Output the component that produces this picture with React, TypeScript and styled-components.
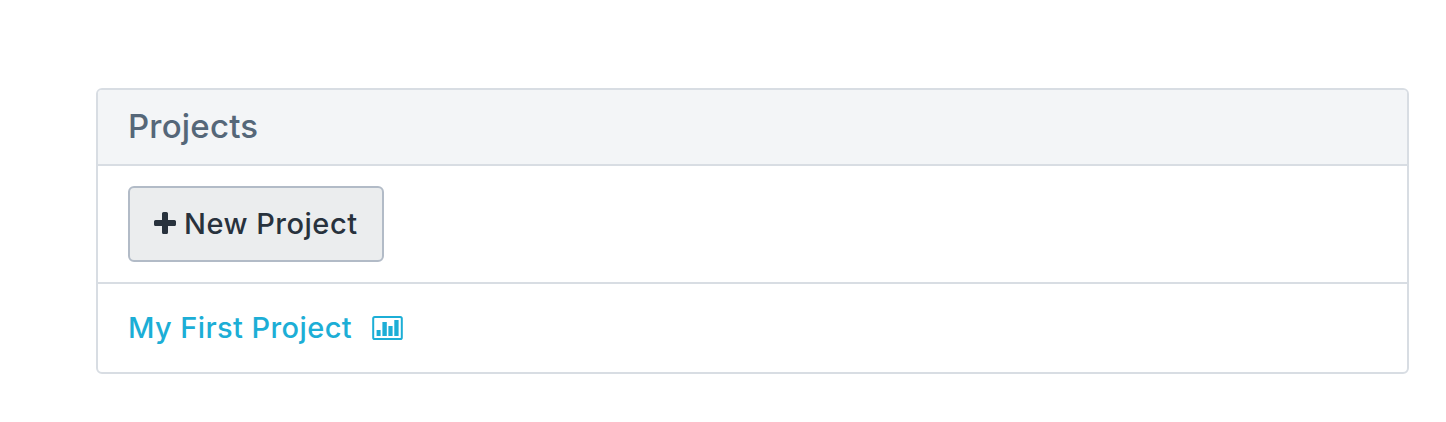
import React from "react";
import styled, { createGlobalStyle } from "styled-components";

const GlobalStyle = createGlobalStyle`
  * { box-sizing: border-box; }
  body {
    margin: 0;
    background: #fff;
    font-family: Inter, "Open Sans", sans-serif;
  }
`;

const Page = styled.main`
  min-height: 422px;
  padding: 88px 37px 48px 96px;
`;

const Panel = styled.section`
  border: 2px solid #d8dde3;
  border-radius: 6px;
  overflow: hidden;
`;

const PanelHeader = styled.header`
  display: flex;
  align-items: center;
  height: 74px;
  padding: 0 30px 2px;
  background: #f3f5f7;
`;

const PanelTitle = styled.h1`
  margin: 0;
  color: #556779;
  font-size: 33px;
  font-weight: 450;
  line-height: 40px;
  letter-spacing: 0.2px;
`;

const PanelRow = styled.div<{ $height: number }>`
  display: flex;
  align-items: center;
  height: ${({ $height }) => $height}px;
  padding: 0 30px;
  border-top: 2px solid #d8dde3;
`;

const NewButton = styled.button`
  display: flex;
  align-items: center;
  gap: 8px;
  width: 256px;
  height: 76px;
  padding: 0 24px;
  border: 2px solid #b2bbc7;
  border-radius: 6px;
  background: #ebedee;
  color: #28323d;
  font: 450 29px/36px Inter, "Open Sans", sans-serif;
  letter-spacing: 0.5px;
  white-space: nowrap;
`;

const ProjectLink = styled.a`
  width: 224px;
  color: #1caed6;
  font-size: 29px;
  font-weight: 450;
  line-height: 36px;
  letter-spacing: 0.4px;
  text-decoration: none;
  white-space: nowrap;
`;

const StatsLink = styled.a`
  display: flex;
  margin-left: 20px;
  color: #1caed6;
`;

const PlusSvg = styled.svg`
  flex: none;
  margin-bottom: 2px;
`;

const PlusIcon = () => (
  <PlusSvg width="22" height="22" viewBox="0 0 22 22" fill="currentColor" aria-hidden="true">
    <path d="M9.6 0h2.8Q14 0 14 1.6V8h6.4Q22 8 22 9.6v2.8q0 1.6-1.6 1.6H14v6.4q0 1.6-1.6 1.6H9.6Q8 22 8 20.4V14H1.6Q0 14 0 12.4V9.6Q0 8 1.6 8H8V1.6Q8 0 9.6 0z" />
  </PlusSvg>
);

const ChartIcon = () => (
  <svg width="31" height="24" viewBox="0 0 31 24" fill="currentColor" aria-hidden="true">
    <rect x="1.2" y="1" width="28.6" height="22" rx="1.6" fill="none" stroke="currentColor" strokeWidth="2" />
    <path d="M4.6 14h4v6h-4zM10.4 6h4.4v14h-4.4zM16.4 10h4.2v10h-4.2zM22.3 4h4.3v16h-4.3z" />
  </svg>
);

export default function App() {
  return (
    <>
      <GlobalStyle />
      <Page>
        <Panel>
          <PanelHeader>
            <PanelTitle>Projects</PanelTitle>
          </PanelHeader>
          <PanelRow $height={118}>
            <NewButton type="button">
              <PlusIcon />
              <span>New Project</span>
            </NewButton>
          </PanelRow>
          <PanelRow $height={90}>
            <ProjectLink>My First Project</ProjectLink>
            <StatsLink aria-label="Project statistics">
              <ChartIcon />
            </StatsLink>
          </PanelRow>
        </Panel>
      </Page>
    </>
  );
}
